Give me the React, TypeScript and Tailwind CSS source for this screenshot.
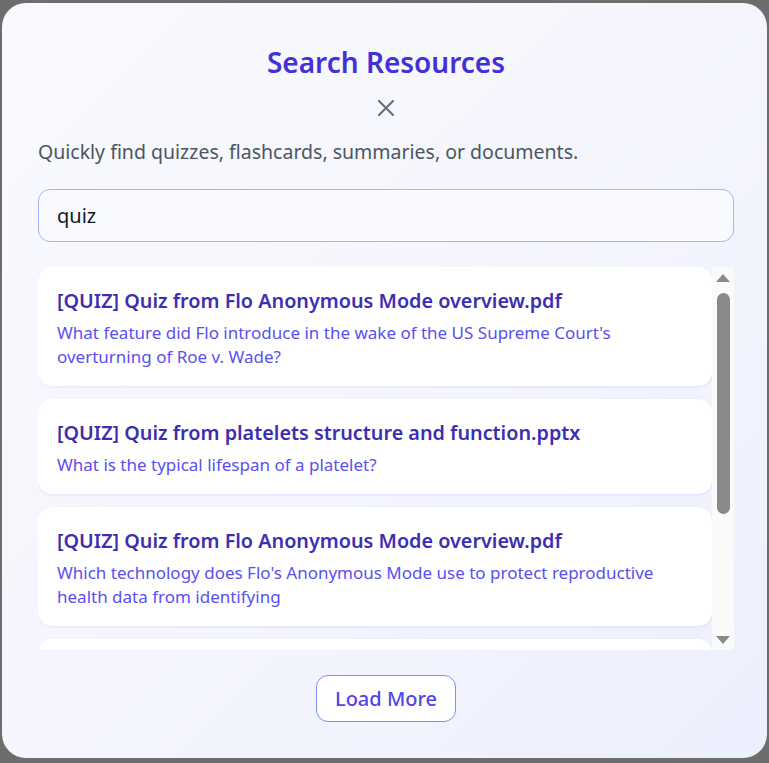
import React from "react";

const items = [
  {
    title: "[QUIZ] Quiz from Flo Anonymous Mode overview.pdf",
    sub: "What feature did Flo introduce in the wake of the US Supreme Court's overturning of Roe v. Wade?",
  },
  {
    title: "[QUIZ] Quiz from platelets structure and function.pptx",
    sub: "What is the typical lifespan of a platelet?",
  },
  {
    title: "[QUIZ] Quiz from Flo Anonymous Mode overview.pdf",
    sub: "Which technology does Flo's Anonymous Mode use to protect reproductive health data from identifying",
  },
  {
    title: "[QUIZ] Quiz from platelets structure and function.pptx",
    sub: "What is the typical lifespan of a platelet?",
  },
];

export default function App() {
  return (
    <div
      className="h-screen w-full bg-[#6d6d6d] pl-[2px] pr-[2px] pt-[3px] pb-[5px] flex"
      style={{ fontFamily: '"Noto Sans", "Open Sans", sans-serif' }}
    >
      <div className="flex-1 rounded-[24px] bg-gradient-to-br from-[#f9fafd] via-[#f5f6fd] to-[#eceffd] pl-[36px] pr-[33px] pt-[39px] flex flex-col">
        <h2 className="text-center text-[28px] leading-[40px] font-semibold text-[#4431d6]">
          Search Resources
        </h2>
        <div className="flex justify-center mt-[14px]">
          <svg width="24" height="24" viewBox="0 0 24 24" fill="none" stroke="#6b7280" strokeWidth="2.2" strokeLinecap="round">
            <path d="M5 5L19 19M19 5L5 19" />
          </svg>
        </div>
        <p className="mt-[19px] text-[19.5px] leading-[26px] text-[#4b5563]">
          Quickly find quizzes, flashcards, summaries, or documents.
        </p>
        <div className="mt-[24px] h-[53px] rounded-[12px] border border-[#a5b4fc] bg-[#f9fafe] flex items-center pl-[18px] text-[20px] text-[#111827]">
          quiz
        </div>
        <div className="mt-[25px] h-[383px] flex">
          <div className="flex-1 overflow-hidden flex flex-col gap-[13px]">
            {items.map((it, i) => (
              <div
                key={i}
                className="shrink-0 rounded-[14px] bg-white shadow-[0_1px_3px_rgba(99,102,241,0.12)] pl-[19px] pr-[20px] pt-[20px] pb-[17px]"
              >
                <div className="text-[19.8px] leading-[28px] font-semibold text-[#3b2fb0]">{it.title}</div>
                <div className="mt-[6px] text-[17px] leading-[24px] text-[#5a4ff0]">{it.sub}</div>
              </div>
            ))}
          </div>
          <div className="w-[22px] bg-[#fafafa] flex flex-col items-center">
            <div className="mt-[7px] w-0 h-0 border-l-[7px] border-r-[7px] border-b-[8px] border-l-transparent border-r-transparent border-b-[#8a8a8a]" />
            <div className="mt-[11px] w-[13px] h-[221px] rounded-full bg-[#8a8a8a]" />
            <div className="flex-1" />
            <div className="mb-[6px] w-0 h-0 border-l-[7px] border-r-[7px] border-t-[8px] border-l-transparent border-r-transparent border-t-[#8a8a8a]" />
          </div>
        </div>
        <div className="flex justify-center mt-[25px]">
          <button className="h-[47px] px-[18px] rounded-[12px] border border-[#818cf8] bg-white flex items-center justify-center">
            <span className="whitespace-nowrap text-[20px] leading-[28px] font-medium text-[#4f46e5]">Load More</span>
          </button>
        </div>
      </div>
    </div>
  );
}
